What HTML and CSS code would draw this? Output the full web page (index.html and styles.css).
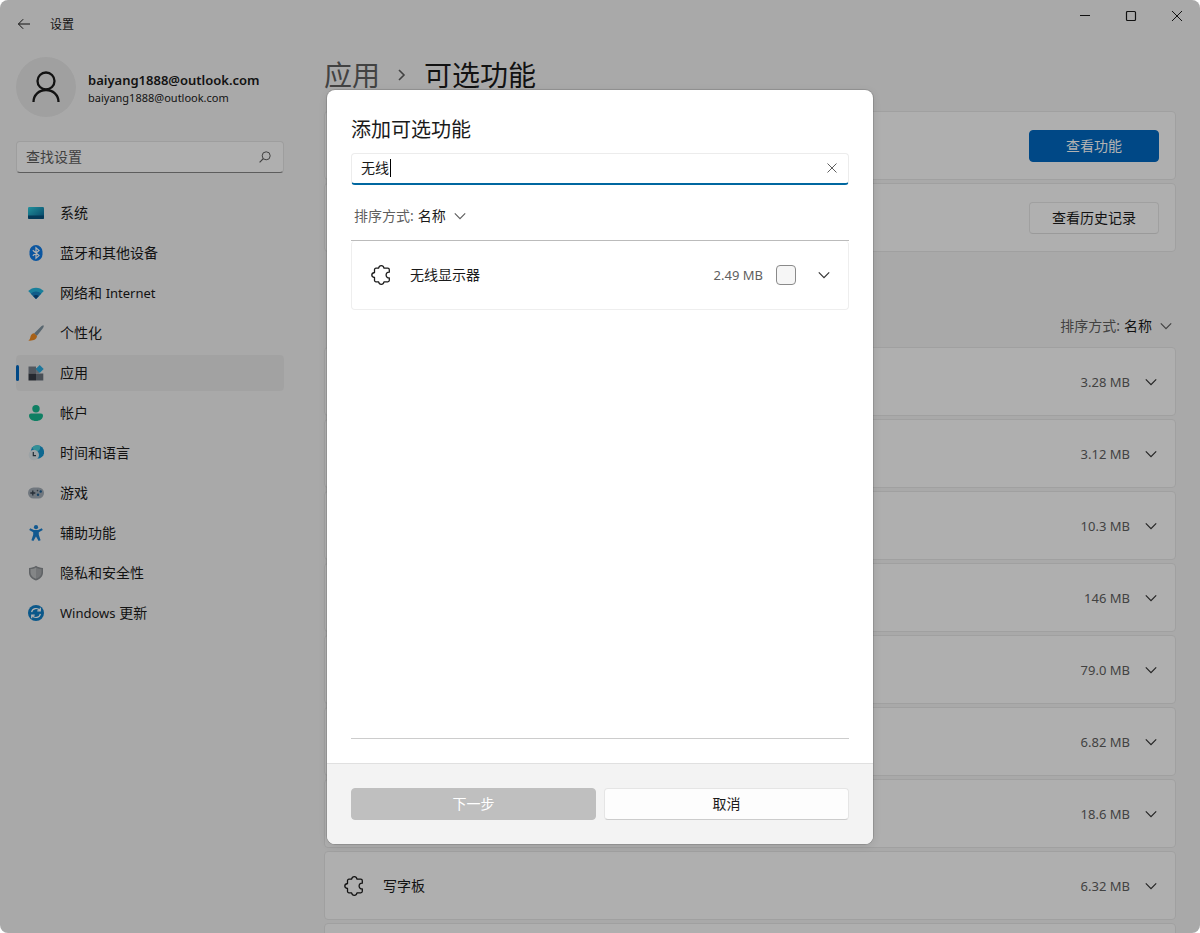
FILE: index.html
```html
<!DOCTYPE html>
<html lang="zh-CN">
<head>
<meta charset="utf-8">
<title>设置</title>
<meta name="viewport" content="width=device-width, initial-scale=1">
<link rel="stylesheet" href="styles.css">
</head>
<body>
<svg class="defs" aria-hidden="true">
  <symbol id="chevron" viewBox="0 0 12 12"><path d="M.8 3.4 6 8.600l5.200-5.200" fill="none" stroke="currentColor" stroke-width="1.200"/></symbol>
  <symbol id="puzzle" viewBox="0 0 20 20"><path d="M5 3.200h2.600C7.900 1.700 8.800.7 10.300.7s2.400 1 2.700 2.500h3.800c.9 0 1.500.6 1.500 1.500v2.500c-1.800-.2-3.200 1-3.200 2.800s1.400 3 3.200 2.800v2.500c0 .9-.6 1.500-1.500 1.500H13c-.3 1.500-1.200 2.500-2.700 2.500s-2.400-1-2.700-2.500H5c-.9 0-1.500-.6-1.500-1.500v-2.800C1.800 12.200.8 11.400.8 10s1-2.200 2.700-2.500V4.700c0-.9.600-1.500 1.500-1.500z" fill="none" stroke="currentColor" stroke-width="1.300" stroke-linejoin="round"/></symbol>
</svg>
<div class="window">
  <header class="titlebar">
    <button class="back" aria-label="返回"><svg width="14" height="12" viewBox="0 0 14 12"><path d="M13 6H1.500M6.200 1.200 1.400 6l4.800 4.800" fill="none" stroke="currentColor"/></svg></button>
    <span class="app-name">设置</span>
    <div class="controls">
      <button aria-label="最小化"><svg width="12" height="12" viewBox="0 0 12 12"><path d="M1 5.500h10" stroke="currentColor"/></svg></button>
      <button aria-label="最大化"><svg width="12" height="12" viewBox="0 0 12 12"><rect x="1.500" y="1.500" width="9" height="9" rx="1" fill="none" stroke="currentColor" stroke-width="1.200"/></svg></button>
      <button aria-label="关闭"><svg width="12" height="12" viewBox="0 0 12 12"><path d="m1 1 10 10M11 1 1 11" stroke="currentColor"/></svg></button>
    </div>
  </header>
  <div class="body">
    <aside class="sidebar">
      <div class="account">
        <span class="avatar"><svg width="30" height="34" viewBox="0 0 30 34"><circle cx="15" cy="11" r="8.500" fill="none" stroke="currentColor" stroke-width="2.300"/><path d="M2.500 32c0-7 5.500-12 12.500-12s12.500 5 12.500 12" fill="none" stroke="currentColor" stroke-width="2.300"/></svg></span>
        <div class="account-text">
          <div class="account-name">baiyang1888@outlook.com</div>
          <div class="account-mail">baiyang1888@outlook.com</div>
        </div>
      </div>
      <label class="search">
        <input type="text" placeholder="查找设置" aria-label="查找设置">
        <svg width="12" height="12" viewBox="0 0 12 12"><circle cx="7.200" cy="4.800" r="4" fill="none" stroke="currentColor"/><path d="M4.300 7.700.6 11.400" stroke="currentColor" stroke-width="1.200"/></svg>
      </label>
      <nav class="nav">
        <a href="#"><svg viewBox="0 0 16 16"><defs><linearGradient id="g1" x2="1" y2="1"><stop stop-color="#30d0e0"/><stop offset="1" stop-color="#075d90"/></linearGradient></defs><rect y="2" width="16" height="12" rx="1.200" fill="url(#g1)"/><path d="M0 10.500h16v2.300a1.200 1.200 0 0 1-1.200 1.200H1.200A1.200 1.200 0 0 1 0 12.800z" fill="#07527e"/></svg>系统</a>
        <a href="#"><svg viewBox="0 0 16 16"><rect x="1.500" width="13" height="16" rx="6.500" fill="#117be5"/><path d="m4.800 5.200 6.200 5.400-3 2.600V2.800l3 2.600-6.200 5.400" fill="none" stroke="#fff" stroke-width="1.200"/></svg>蓝牙和其他设备</a>
        <a href="#"><svg viewBox="0 0 16 16"><path d="M.2 6C4.500 1.500 11.500 1.500 15.800 6L8 14z" fill="#25b7df"/><path d="M2.800 8.700c3-3 7.400-3 10.400 0L8 14z" fill="#1684c5"/><path d="M5.200 11.100c1.700-1.500 3.900-1.500 5.600 0L8 14z" fill="#0a4b88"/></svg>网络和 <span class="latin">Internet</span></a>
        <a href="#"><svg viewBox="0 0 16 16"><path d="M15.500.4c.7.7-.2 2.300-1.200 3.600L8.800 11 6 8.400 12.600 2C13.800.9 15 0 15.500.4z" fill="#7e929f"/><path d="m6 8.200 3 2.800c-.2 3.200-3.500 5.200-9 4.600 2-.7 2-1.900 2.500-4C3 9.600 4.300 8.300 6 8.200z" fill="#f08b22"/></svg>个性化</a>
        <a href="#" class="current" aria-current="page"><svg viewBox="0 0 16 16"><path d="M.5 1.500h7.500v7H.5z" fill="#777f88"/><path d="M.5 8.500H8v7H.5z" fill="#363c45"/><path d="M8 8.500h7.300v7H8z" fill="#69727c"/><path d="M8 3h3v5.500H8z" fill="#9299a1"/><path d="m11.700 0 4 4-4 4-4-4z" fill="#29a9df"/></svg>应用</a>
        <a href="#"><svg viewBox="0 0 16 16"><circle cx="8" cy="3.700" r="3.700" fill="#16b78e"/><path d="M3 8.500h10a2 2 0 0 1 2 2c0 3.300-3 5.500-7 5.500s-7-2.200-7-5.500a2 2 0 0 1 2-2z" fill="#16b78e"/></svg>帐户</a>
        <a href="#"><svg viewBox="0 0 16 16"><circle cx="9.300" cy="7" r="6.800" fill="#1596ce"/><path d="M4 2.800C6.400.1 10-.2 12 1c1 3.200-1 5.200-4 6z" fill="#4acfd8"/><circle cx="5.800" cy="10" r="5.200" fill="#e0e8ed"/><path d="M5.300 7v3.600H8" fill="none" stroke="#32414d" stroke-width="1.200"/></svg>时间和语言</a>
        <a href="#"><svg viewBox="0 0 16 16"><rect y="2.500" width="16" height="11" rx="5.500" fill="#a1abb5"/><path d="M2.300 8h5M4.800 5.500v5" stroke="#37434f" stroke-width="1.300"/><circle cx="10" cy="9.700" r="1.200" fill="#205f91"/><circle cx="12.700" cy="6.500" r="1.200" fill="#205f91"/><circle cx="9.500" cy="5.600" r=".8" fill="#48535e"/></svg>游戏</a>
        <a href="#"><svg viewBox="0 0 16 16"><circle cx="8" cy="2.200" r="2.100" fill="#1b80cf"/><path d="M2.200 3.200 6 5h4l3.800-1.800 1 1.800-4 2.200v2.600l1.800 5.500-2 .7L8 11.500 5.400 16l-2-.7 1.800-5.500V7.200L1.200 5z" fill="#1b80cf"/></svg>辅助功能</a>
        <a href="#"><svg viewBox="0 0 16 16"><path d="M8 .8c2 1.500 4.300 2 7 2.100v4.600c0 4-3 6.600-7 8-4-1.400-7-4-7-8V2.900C3.700 2.800 6 2.300 8 .8z" fill="#8a8e92"/><path d="M8 2.400c1.700 1.100 3.500 1.600 5.500 1.700v3.500c0 3-2.200 5-5.500 6.200z" fill="#a6aaad"/><path d="M8 2.400C6.300 3.500 4.500 4 2.500 4.100v3.500c0 3 2.200 5 5.500 6.200z" fill="#bdc0c2"/></svg>隐私和安全性</a>
        <a href="#"><svg viewBox="0 0 16 16"><circle cx="8" cy="8" r="8" fill="#117fc6"/><path d="M3.600 7.200a4.600 4.600 0 0 1 8.200-1.800M12.400 8.800a4.600 4.600 0 0 1-8.200 1.800M12.300 2.800v3H9.300M3.700 13.200v-3h3" fill="none" stroke="#fff" stroke-width="1.200"/></svg><span class="latin">Windows</span> 更新</a>
      </nav>
    </aside>
    <main class="main">
      <h1 class="crumbs"><a href="#">应用</a><svg width="8" height="14" viewBox="0 0 8 14"><path d="m1 2 5 5-5 5" fill="none" stroke="currentColor" stroke-width="1.600"/></svg><span>可选功能</span></h1>
      <div class="cards">
        <div class="card"><button class="btn primary">查看功能</button></div>
        <div class="card"><button class="btn">查看历史记录</button></div>
      </div>
      <div class="sort end">
        <label for="sort-main">排序方式:</label>
        <span class="picker"><select id="sort-main"><option>名称</option></select><svg class="chev"><use href="#chevron"/></svg></span>
      </div>
      <ul class="cards">
        <li class="card"><span class="size">3.28 MB</span><svg class="chev"><use href="#chevron"/></svg></li>
        <li class="card"><span class="size">3.12 MB</span><svg class="chev"><use href="#chevron"/></svg></li>
        <li class="card"><span class="size">10.3 MB</span><svg class="chev"><use href="#chevron"/></svg></li>
        <li class="card"><span class="size">146 MB</span><svg class="chev"><use href="#chevron"/></svg></li>
        <li class="card"><span class="size">79.0 MB</span><svg class="chev"><use href="#chevron"/></svg></li>
        <li class="card"><span class="size">6.82 MB</span><svg class="chev"><use href="#chevron"/></svg></li>
        <li class="card"><span class="size">18.6 MB</span><svg class="chev"><use href="#chevron"/></svg></li>
        <li class="card"><svg class="puzzle"><use href="#puzzle"/></svg><span class="name">写字板</span><span class="size">6.32 MB</span><svg class="chev"><use href="#chevron"/></svg></li>
        <li class="card"></li>
      </ul>
    </main>
  </div>
  <div class="backdrop">
    <section class="dialog" role="dialog" aria-modal="true" aria-labelledby="dialog-title">
      <div class="content">
        <h2 id="dialog-title">添加可选功能</h2>
        <div class="filter">
          <input type="text" value="无线" aria-label="查找可用的可选功能">
          <span class="caret"></span>
          <button aria-label="清除"><svg width="10" height="10" viewBox="0 0 10 10"><path d="m.5.5 9 9M9.500.5l-9 9" stroke="currentColor"/></svg></button>
        </div>
        <div class="sort">
          <label for="sort-dialog">排序方式:</label>
          <span class="picker"><select id="sort-dialog"><option>名称</option></select><svg class="chev"><use href="#chevron"/></svg></span>
        </div>
        <div class="results">
          <div class="card">
            <svg class="puzzle"><use href="#puzzle"/></svg>
            <label class="name" for="pick">无线显示器</label>
            <span class="size">2.49 MB</span>
            <input type="checkbox" id="pick">
            <svg class="chev"><use href="#chevron"/></svg>
          </div>
        </div>
      </div>
      <footer class="actions">
        <button class="btn" disabled>下一步</button>
        <button class="btn">取消</button>
      </footer>
    </section>
  </div>
</div>
</body>
</html>
```
FILE: styles.css
```css
* { box-sizing: border-box; }
body {
  margin: 0;
  background: #fff;
  color: #1a1a1a;
  font: 14px/20px "Noto Sans", "Noto Sans CJK SC", sans-serif;
}
button, input, select { font: inherit; color: inherit; }
button { border: 0; background: none; padding: 0; }
h1, h2, ul { margin: 0; padding: 0; font-weight: 400; list-style: none; }
a { color: inherit; text-decoration: none; }
svg { display: block; flex: none; }
.defs { position: absolute; width: 0; height: 0; }
.latin { font-size: 13px; }

.window {
  position: relative;
  display: flex;
  flex-direction: column;
  height: 100vh;
  overflow: hidden;
  border-radius: 8px;
  background: #f3f3f3;
}
.titlebar { display: flex; align-items: center; height: 48px; flex: none; padding-left: 16px; }
.back { width: 16px; display: grid; place-items: center; }
.app-name { margin-left: 18px; padding-top: 2px; font-size: 12px; }
.controls { display: flex; align-self: flex-start; margin-left: auto; }
.controls button { width: 46px; height: 32px; display: grid; place-items: center; }

.body { display: flex; flex: 1; min-height: 0; }
.sidebar { width: 300px; flex: none; padding: 9px 16px; }
.account { display: flex; align-items: center; gap: 12px; }
.account-text { padding-top: 2px; }
.avatar {
  display: grid;
  place-items: center;
  width: 60px;
  height: 60px;
  border-radius: 50%;
  background: #e5e5e5;
}
.account-name { font-size: 13px; font-weight: 600; line-height: 20px; }
.account-mail { font-size: 11px; line-height: 16px; }
.search {
  display: flex;
  align-items: center;
  height: 32px;
  margin: 24px 0 22px;
  padding: 0 12px 0 9px;
  border: 1px solid #e2e2e2;
  border-bottom-color: #868686;
  border-radius: 4px;
  background: #fbfbfb;
  color: #5c5c5c;
}
.search input { flex: 1; min-width: 0; border: 0; padding: 0; background: none; outline: 0; }
.search input::placeholder { color: #5c5c5c; opacity: 1; }
.nav { display: flex; flex-direction: column; gap: 4px; }
.nav a {
  display: flex;
  align-items: center;
  height: 36px;
  padding-left: 12px;
  border-radius: 4px;
  white-space: pre;
}
.nav svg { width: 16px; height: 16px; margin-right: 16px; }
.nav .current { position: relative; background: #e9e9e9; }
.nav .current::before {
  content: "";
  position: absolute;
  left: 0;
  width: 3px;
  height: 16px;
  border-radius: 2px;
  background: #0067c0;
}

.main { flex: 1; min-width: 0; padding: 7px 24px 0; }
.crumbs { display: flex; align-items: center; height: 40px; margin-bottom: 16px; font-size: 28px; line-height: 40px; }
.crumbs a { color: #5f5f5f; }
.crumbs svg { margin: 0 18px; color: #5f5f5f; }
.cards { display: flex; flex-direction: column; gap: 3px; }
.card {
  display: flex;
  align-items: center;
  justify-content: flex-end;
  height: 69px;
  padding: 0 16px 0 19px;
  border: 1px solid #e5e5e5;
  border-radius: 4px;
  background: #fbfbfb;
}
.card .name { margin-left: 19px; margin-right: auto; }
.card .size { font-size: 13px; color: #5f5f5f; }
.card .chev { margin: 0 2px 0 15px; color: #333; }
.chev { width: 12px; height: 12px; }
.puzzle { width: 20px; height: 20px; }
.btn {
  min-width: 130px;
  height: 32px;
  border: 1px solid #e5e5e5;
  border-bottom-color: #ccc;
  border-radius: 4px;
  background: #fdfdfd;
}
.card .btn { border-bottom-color: #ddd; }
.card .primary { border-color: #0067c0; background: #0067c0; color: #fff; }
.sort { display: flex; align-items: center; gap: 4px; height: 20px; color: #5f5f5f; }
.sort.end { justify-content: flex-end; margin: 64px 4px 11px 0; }
.picker { display: grid; align-items: center; }
.picker > * { grid-area: 1 / 1; }
.picker select { appearance: none; border: 0; padding: 0 20px 0 0; background: none; color: #1a1a1a; }
.picker .chev { justify-self: end; pointer-events: none; }

.backdrop {
  position: absolute;
  inset: 0;
  display: grid;
  place-items: center;
  background: rgba(0, 0, 0, .3);
}
.dialog {
  display: flex;
  flex-direction: column;
  width: min(546px, 100%);
  height: min(754px, 100%);
  overflow: hidden;
  border-radius: 8px;
  background: #fff;
  box-shadow: 0 0 0 1px rgba(0, 0, 0, .12), 0 2px 8px rgba(0, 0, 0, .1);
}
.content { display: flex; flex-direction: column; flex: 1; padding: 24px; }
.content h2 { font-size: 20px; line-height: 32px; margin-bottom: 7px; }
.filter {
  position: relative;
  display: flex;
  align-items: center;
  height: 32px;
  padding: 0 11px 0 9px;
  border: 1px solid #ececec;
  border-bottom: 2px solid #0067a0;
  border-radius: 4px;
}
.filter input { flex: 1; min-width: 0; border: 0; padding: 0; background: none; outline: 0; }
.filter .caret { position: absolute; left: 38px; width: 1px; height: 18px; background: #000; }
.filter button { color: #5f5f5f; }
.content .sort { margin: 21px 0 14px 3px; }
.results { flex: 1; border-top: 1px solid #bbb; border-bottom: 1px solid #ccc; }
.results .card { background: #fff; border-color: #eee; border-top: 0; }
.card input[type="checkbox"] {
  appearance: none;
  width: 20px;
  height: 20px;
  margin: 0 7px 0 13px;
  border: 1px solid #8a8a8a;
  border-radius: 4px;
  background: #f6f6f6;
}
.actions {
  display: grid;
  grid-template-columns: 1fr 1fr;
  gap: 8px;
  padding: 24px;
  border-top: 1px solid #e0e0e0;
  background: #f3f3f3;
}
.btn:disabled { border-color: #bfbfbf; background: #bfbfbf; color: #fff; }
```
